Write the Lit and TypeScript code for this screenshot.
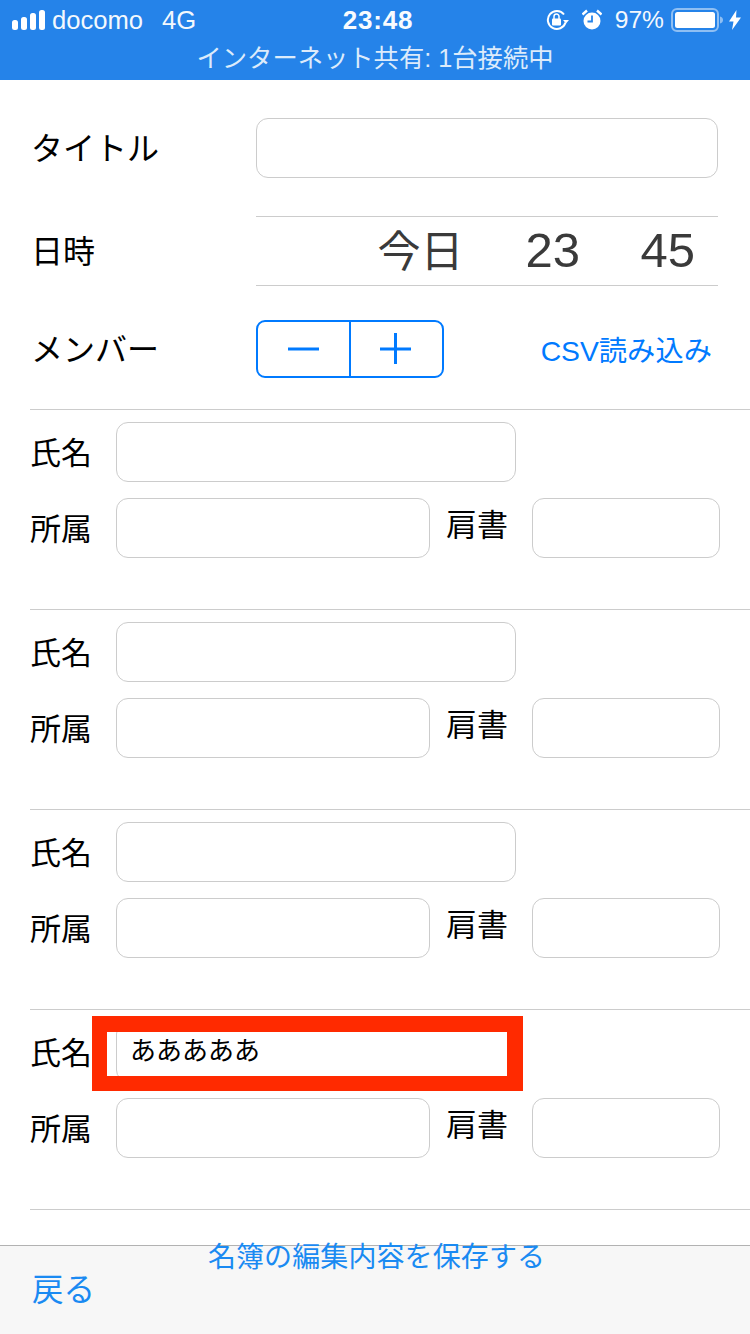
import { LitElement, html, css } from 'lit';
import { customElement } from 'lit/decorators.js';

const FONT = css`"Liberation Sans", "Noto Sans CJK JP", sans-serif`;

@customElement('status-bar')
class StatusBar extends LitElement {
  static styles = css`
    :host {
      display: block;
      height: 80px;
      background: #2583e9;
      color: #fff;
      font-family: ${FONT};
    }
    .top {
      display: grid;
      grid-template-columns: 1fr auto 1fr;
      align-items: center;
      height: 40px;
      padding: 0 9px 0 12px;
    }
    .left, .right {
      display: flex;
      align-items: center;
    }
    .right { justify-content: flex-end; }
    .carrier {
      font-size: 25.6px;
      margin-left: 7px;
      opacity: 0.95;
    }
    .net {
      font-size: 25.6px;
      margin-left: 19px;
      opacity: 0.95;
    }
    .time {
      font-size: 26px;
      font-weight: 700;
      letter-spacing: 0.8px;
      padding-left: 3px;
      opacity: 0.97;
    }
    svg { display: block; }
    .alarm { margin-left: 12px; }
    .pct {
      font-size: 24.6px;
      margin-left: 13px;
      opacity: 0.95;
    }
    .batt { margin-left: 7px; }
    .bolt { margin-left: 5px; }
    .tether {
      height: 36px;
      line-height: 36px;
      text-align: center;
      font-size: 25.3px;
      color: #dcebfb;
    }
  `;

  render() {
    return html`
      <div class="top">
        <div class="left">
          <svg width="33" height="22" viewBox="0 0 33 22" fill="#fff">
            <rect x="0" y="11" width="6" height="10" rx="2.5"></rect>
            <rect x="9" y="8" width="6" height="13" rx="2.5"></rect>
            <rect x="18" y="4" width="6" height="17" rx="2.5"></rect>
            <rect x="27" y="1" width="6" height="20" rx="2.5"></rect>
          </svg>
          <span class="carrier">docomo</span>
          <span class="net">4G</span>
        </div>
        <div class="time">23:48</div>
        <div class="right">
          <svg width="24" height="22" viewBox="0 0 24 22" fill="none">
            <path d="M19.5 13.5A9 9 0 1 1 18 5.5" stroke="#fff" stroke-width="2"></path>
            <path d="M17 11h6l-3 3.5z" fill="#fff"></path>
            <rect x="6" y="9.5" width="9" height="7" rx="1" fill="#fff"></rect>
            <path d="M8 10V7.5a2.5 2.5 0 0 1 5 0V10" stroke="#fff" stroke-width="1.5"></path>
          </svg>
          <svg class="alarm" width="20" height="22" viewBox="0 0 20 22">
            <circle cx="10" cy="12" r="8.5" fill="#fff"></circle>
            <path d="M10 6.5V12.5H5.5" stroke="#2583e9" stroke-width="1.8" fill="none"></path>
            <path d="M0.5 5.5L5 1.5M19.5 5.5L15 1.5" stroke="#fff" stroke-width="2.4"></path>
          </svg>
          <span class="pct">97%</span>
          <svg class="batt" width="53" height="24" viewBox="0 0 53 24">
            <rect x="1" y="1" width="46" height="22" rx="5" fill="none" stroke="#8fbff3" stroke-width="2"></rect>
            <rect x="4" y="4" width="40" height="16" rx="2.5" fill="#fff"></rect>
            <path d="M49 8.5c2 .5 3 1.8 3 3.5s-1 3-3 3.5z" fill="#8fbff3"></path>
          </svg>
          <svg class="bolt" width="12" height="20" viewBox="0 0 12 20" fill="#fff">
            <path d="M7.5 0L0 11.5h4.5L3 20l9-12.5H7z"></path>
          </svg>
        </div>
      </div>
      <div class="tether">インターネット共有: 1台接続中</div>
    `;
  }
}

@customElement('member-card')
class MemberCard extends LitElement {
  static properties = {
    name: { type: String },
    marked: { type: Boolean },
  };

  declare name: string;
  declare marked: boolean;

  constructor() {
    super();
    this.name = '';
    this.marked = false;
  }

  static styles = css`
    :host {
      display: block;
      position: relative;
      box-sizing: border-box;
      height: 200px;
      margin-left: 30px;
      padding-top: 12px;
      border-top: 1px solid #cccccc;
      font-family: ${FONT};
    }
    .row {
      display: flex;
      align-items: center;
      height: 60px;
      font-size: 31px;
      color: #000;
    }
    .row + .row { margin-top: 16px; }
    .lab { width: 86px; flex: none; padding-bottom: 4px; box-sizing: border-box; }
    .lab.title { margin: 0 0 8px 16px; }
    input {
      box-sizing: border-box;
      height: 60px;
      padding: 0 13px;
      margin: 0;
      border: 1px solid #cccccc;
      border-radius: 12px;
      background: #fff;
      outline: none;
      font: 26px/30px ${FONT};
      color: #000;
    }
    .w-name { width: 400px; }
    .w-org { width: 314px; }
    .w-title { width: 188px; }
    .mark {
      position: absolute;
      left: 62px;
      top: 6px;
      box-sizing: border-box;
      width: 431px;
      height: 75px;
      border: solid #ff2a00;
      border-width: 16px 16px 15px 15px;
    }
    .name-val { padding-bottom: 8px; }
  `;

  render() {
    return html`
      <div class="row">
        <span class="lab">氏名</span>
        <input class="w-name ${this.name ? 'name-val' : ''}" .value=${this.name} />
      </div>
      <div class="row">
        <span class="lab">所属</span>
        <input class="w-org" />
        <span class="lab title">肩書</span>
        <input class="w-title" />
      </div>
      ${this.marked ? html`<div class="mark"></div>` : ''}
    `;
  }
}

@customElement('app-root')
class AppRoot extends LitElement {
  static styles = css`
    :host {
      display: flex;
      flex-direction: column;
      width: 750px;
      height: 1334px;
      background: #fff;
      overflow: hidden;
      font-family: ${FONT};
    }
    main {
      flex: 1;
      min-height: 0;
    }
    .head {
      padding: 38px 32px 31px 33px;
      display: flex;
      flex-direction: column;
    }
    .line {
      display: flex;
      align-items: center;
      font-size: 32px;
      color: #000;
    }
    .line > .lab { width: 223px; flex: none; margin-left: -2px; padding-right: 2px; padding-bottom: 5px; }
    .title-input {
      box-sizing: border-box;
      width: 462px;
      height: 60px;
      border: 1px solid #cccccc;
      border-radius: 12px;
    }
    .date-line { margin-top: 38px; }
    .picker {
      box-sizing: border-box;
      display: flex;
      align-items: center;
      justify-content: flex-end;
      width: 462px;
      height: 70px;
      padding-right: 23px;
      border-top: 1px solid #cccccc;
      border-bottom: 1px solid #cccccc;
      color: #3a3a3a;
      font-size: 49px;
    }
    .picker span { padding-bottom: 2px; }
    .picker .today { font-size: 43px; margin-right: 62px; padding-bottom: 6px; }
    .hour { margin-right: 60.5px; }
    .member-line { margin-top: 34px; }
    .stepper {
      box-sizing: border-box;
      display: flex;
      width: 188px;
      height: 58px;
      border: 2px solid #007aff;
      border-radius: 9px;
    }
    .stepper div {
      flex: 1;
      display: flex;
      align-items: center;
      justify-content: center;
    }
    .stepper div + div { border-left: 2px solid #007aff; }
    .plus { margin-left: -2px; }
    .csv {
      margin-left: auto;
      margin-right: 6px;
      padding-bottom: 2px;
      font-size: 28.3px;
      color: #007aff;
      white-space: nowrap;
    }
    .end {
      margin-left: 30px;
      border-top: 1px solid #cccccc;
    }
    footer {
      position: relative;
      box-sizing: border-box;
      height: 89px;
      flex: none;
      display: flex;
      align-items: center;
      padding: 0 0 0 32px;
      background: #f7f7f7;
      border-top: 1px solid #b2b2b2;
      color: #1a8af2;
    }
    .back { font-size: 31.5px; margin-bottom: 6px; }
    .save {
      position: absolute;
      left: 0;
      right: 0;
      top: -6px;
      padding-left: 3px;
      text-align: center;
      font-size: 28px;
      letter-spacing: 0.1px;
      line-height: 36px;
    }
  `;

  render() {
    return html`
      <status-bar></status-bar>
      <main>
        <div class="head">
          <div class="line">
            <span class="lab">タイトル</span>
            <div class="title-input"></div>
          </div>
          <div class="line date-line">
            <span class="lab">日時</span>
            <div class="picker">
              <span class="today">今日</span>
              <span class="hour">23</span>
              <span>45</span>
            </div>
          </div>
          <div class="line member-line">
            <span class="lab">メンバー</span>
            <div class="stepper">
              <div>
                <svg width="32" height="32" viewBox="0 0 32 32"><path d="M0 16H31" stroke="#007aff" stroke-width="3"></path></svg>
              </div>
              <div>
                <svg class="plus" width="32" height="32" viewBox="0 0 32 32"><path d="M0 16H31M15.5 0V31" stroke="#007aff" stroke-width="3"></path></svg>
              </div>
            </div>
            <span class="csv">CSV読み込み</span>
          </div>
        </div>
        <member-card></member-card>
        <member-card></member-card>
        <member-card></member-card>
        <member-card name="あああああ" marked></member-card>
        <div class="end"></div>
      </main>
      <footer>
        <span class="save">名簿の編集内容を保存する</span>
        <span class="back">戻る</span>
      </footer>
    `;
  }
}
